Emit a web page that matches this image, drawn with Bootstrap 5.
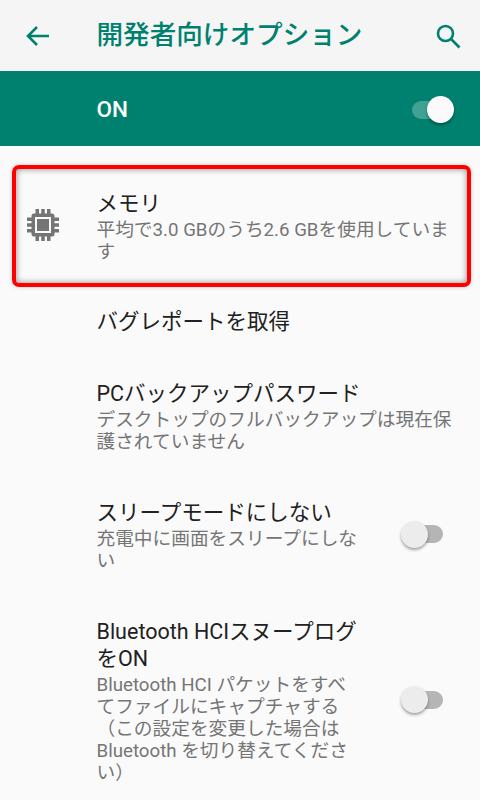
<!DOCTYPE html>
<html lang="ja"><head><meta charset="utf-8">
<title>開発者向けオプション</title>
<link rel="stylesheet" href="https://cdn.jsdelivr.net/npm/bootstrap@5.3.0/dist/css/bootstrap.min.css">
<style>
html,body{height:800px;overflow:hidden}
body{background:#fafafa;font-family:Roboto,"Noto Sans CJK JP",sans-serif;width:480px}
.appbar{height:71px;background:#f5f5f5;color:#00816f}
.appbar-title{font-size:26.6px;font-weight:500;margin-left:45.5px;line-height:1;flex:1}
.back-ic{margin-left:25px}
.search-ic{margin-right:19px}
.onbar{height:75px;background:#00816f;color:#fff;padding-left:96.5px;padding-right:33px;padding-top:2px;font-size:22.5px;font-weight:500}
.sw-track{width:35px;height:18px;border-radius:10px;position:relative;display:block}
.sw-knob{width:27px;height:27px;border-radius:50%;position:absolute;top:-4.5px;box-shadow:0 2px 3px rgba(0,0,0,.35)}
.sw-on .sw-track{background:#3fa292}
.sw-on .sw-knob{background:#fafafa;right:-7px}
.sw-off .sw-track{background:#b5b5b5}
.sw-off .sw-knob{background:#ececec;left:-7px}
.rowlist{padding-top:19px}
.pref{display:flex;align-items:center;position:relative;padding-left:96.5px;padding-right:25px;color:#212121}
.pref-title{font-size:21.5px;line-height:27px;margin-bottom:2px}
.pref-sub{font-size:18.7px;line-height:22px;color:#757575}
.pref-ic{position:absolute}
.hl{height:122px;margin:0 9px -1px 12px;padding-left:80.5px;padding-right:8px;border:4px solid #f00;border-radius:7px;box-shadow:inset 0 0 6px rgba(0,0,0,.45),0 0 4px rgba(0,0,0,.2)}
.hl .pref-ic{left:11px;top:40px}
.r-bug{height:72px}
.r-pc{height:98px;margin-top:9px}
.r-sleep{height:99px;margin-top:21px}
.r-bt{margin-top:33px}
.txt-sw{width:264px;flex:none}
.sw-off{margin-left:auto;margin-right:12px;margin-bottom:3px}
</style></head><body>
<header class="appbar d-flex align-items-center">
<svg class="back-ic" width="26" height="26" viewBox="0 0 26 26" fill="none" stroke="#00816f" stroke-width="2.6"><path d="M24 13H3M12 4l-9 9 9 9"/></svg>
<div class="appbar-title">開発者向けオプション</div>
<svg class="search-ic" width="26" height="26" viewBox="0 0 26 26" fill="none" stroke="#00816f" stroke-width="2.6"><circle cx="10.500" cy="10.500" r="7.500"/><path d="M16 16l8.500 8.500"/></svg>
</header>
<div class="onbar d-flex align-items-center justify-content-between"><span>ON</span><span class="sw-on"><span class="sw-track"><span class="sw-knob"></span></span></span></div>
<div class="rowlist">
<div class="pref hl"><svg class="pref-ic" width="32" height="32" viewBox="0 0 32 32" fill="#757575"><path fill-rule="evenodd" d="M7 4.500h18a2.500 2.500 0 0 1 2.500 2.500v18a2.500 2.500 0 0 1-2.500 2.500H7A2.500 2.500 0 0 1 4.500 25V7A2.500 2.500 0 0 1 7 4.500zM8 8v16h16V8z"/><rect x="10" y="10" width="12" height="12"/><path d="M8.500 0h3.500v5H8.500zM14.250 0h3.500v5h-3.500zM20 0h3.500v5H20zM8.500 27h3.500v5H8.500zM14.250 27h3.500v5h-3.500zM20 27h3.500v5H20zM0 8.500h5V12H0zM0 14.250h5v3.500H0zM0 20h5v3.500H0zM27 8.500h5V12h-5zM27 14.250h5v3.500h-5zM27 20h5v3.500h-5z"/></svg>
<div><div class="pref-title">メモリ</div><div class="pref-sub">平均で3.0 GBのうち2.6 GBを使用していま<br>す</div></div></div>
<div class="pref r-bug"><div class="pref-title">バグレポートを取得</div></div>
<div class="pref r-pc"><div><div class="pref-title">PCバックアップパスワード</div><div class="pref-sub">デスクトップのフルバックアップは現在保<br>護されていません</div></div></div>
<div class="pref r-sleep"><div class="txt-sw"><div class="pref-title">スリープモードにしない</div><div class="pref-sub">充電中に画面をスリープにしな<br>い</div></div><span class="sw-off"><span class="sw-track"><span class="sw-knob"></span></span></span></div>
<div class="pref r-bt"><div class="txt-sw"><div class="pref-title">Bluetooth HCIスヌープログ<br>をON</div><div class="pref-sub">Bluetooth HCI パケットをすべ<br>てファイルにキャプチャする<br>（この設定を変更した場合は<br>Bluetooth を切り替えてくださ<br>い）</div></div><span class="sw-off"><span class="sw-track"><span class="sw-knob"></span></span></span></div>
</div>
<script src="https://cdn.jsdelivr.net/npm/bootstrap@5.3.0/dist/js/bootstrap.bundle.min.js"></script>
</body></html>
